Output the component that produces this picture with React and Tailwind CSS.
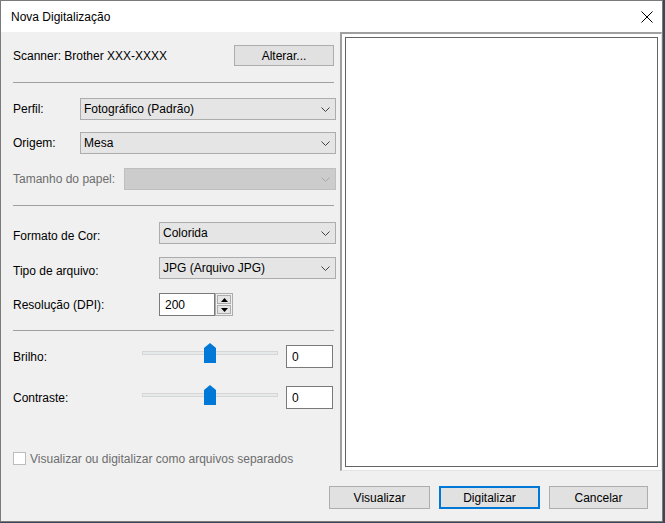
import React from "react";

function Chevron({ color = "#404040" }) {
  return (
    <svg width="9" height="5" viewBox="0 0 9 5" className="shrink-0">
      <path d="M0.5 0.5 L4.5 4.5 L8.5 0.5" fill="none" stroke={color} strokeWidth="1" />
    </svg>
  );
}

function Combo({ text, width, disabled }) {
  return (
    <div
      className={
        "h-[22px] shrink-0 flex items-center justify-between pl-[3px] pr-[5px] border " +
        (disabled ? "bg-[#cccccc] border-[#bfbfbf]" : "bg-[#e5e5e5] border-[#acacac]")
      }
      style={{ width }}
    >
      <span className="text-black">{text}</span>
      <Chevron color={disabled ? "#a8a8a8" : "#404040"} />
    </div>
  );
}

function Thumb() {
  return (
    <svg width="12" height="20" viewBox="0 0 12 20" className="absolute left-[62px] top-0">
      <polygon points="0,5 6,0 12,5 12,20 0,20" fill="#0078d7" />
    </svg>
  );
}

function SliderRow({ label, mt, boxMt }) {
  return (
    <div className={"flex items-start " + mt}>
      <div className={"w-[129px] h-[23px] flex items-center " + boxMt}>{label}</div>
      <div className="relative w-[136px] h-[20px]">
        <div className="absolute left-0 right-0 top-[8px] h-[4px] bg-[#e7eaea] border border-[#d6d6d6]" />
        <Thumb />
      </div>
      <div className={"ml-[8px] w-[47px] h-[23px] bg-white border border-[#7a7a7a] flex items-center pl-[5px] " + boxMt}>
        0
      </div>
    </div>
  );
}

function Button({ children, primary, width = "w-[101px] h-[23px]" }) {
  return (
    <div
      className={
        width +
        " flex items-center justify-center bg-[#e1e1e1] " +
        (primary ? "border-2 border-[#0078d7]" : "border border-[#adadad]")
      }
    >
      {children}
    </div>
  );
}

export default function App() {
  return (
    <div
      className="w-[665px] h-[523px] bg-[#3b4756] text-[12px] text-black"
      style={{ fontFamily: '"Liberation Sans", Arial, sans-serif' }}
    >
      <div className="w-[663px] h-[522px] border border-[#7a7a7a] bg-[#f0f0f0] flex flex-col">
        {/* Title bar */}
        <div className="h-[31px] bg-white flex items-center justify-between pl-[10px] pr-[9px]">
          <span>Nova Digitalização</span>
          <svg width="12" height="12" viewBox="0 0 12 12">
            <path d="M0.5 0.5 L11.5 11.5 M11.5 0.5 L0.5 11.5" stroke="#000" strokeWidth="1" fill="none" />
          </svg>
        </div>

        {/* Main */}
        <div className="flex h-[439px]">
          {/* Left panel */}
          <div className="w-[339px] pl-[12px] flex flex-col">
            <div className="mt-[13px] h-[21px] flex items-center justify-between w-[321px]">
              <span>Scanner: Brother XXX-XXXX</span>
              <Button width="w-[100px] h-[21px]">Alterar...</Button>
            </div>
            <div className="mt-[16px] h-px w-[321px] bg-[#a0a0a0]" />

            <div className="mt-[15px] h-[22px] flex items-center">
              <div className="w-[67px]">Perfil:</div>
              <Combo text="Fotográfico (Padrão)" width={256} />
            </div>
            <div className="mt-[12px] h-[22px] flex items-center">
              <div className="w-[67px]">Origem:</div>
              <Combo text="Mesa" width={256} />
            </div>
            <div className="mt-[14px] h-[22px] flex items-center">
              <div className="w-[111px] text-[#6d6d6d]">Tamanho do papel:</div>
              <Combo text="" width={212} disabled />
            </div>
            <div className="mt-[15px] h-px w-[321px] bg-[#a0a0a0]" />

            <div className="mt-[16px] h-[22px] flex items-start">
              <div className="w-[146px] h-[22px] pt-[5px] leading-[18px]">Formato de Cor:</div>
              <Combo text="Colorida" width={177} />
            </div>
            <div className="mt-[13px] h-[22px] flex items-start">
              <div className="w-[146px] h-[22px] pt-[5px] leading-[18px]">Tipo de arquivo:</div>
              <Combo text="JPG (Arquivo JPG)" width={177} />
            </div>
            <div className="mt-[14px] h-[23px] flex items-center">
              <div className="w-[146px]">Resolução (DPI):</div>
              <div className="w-[56px] h-[23px] bg-white border border-[#7a7a7a] flex items-center pl-[5px]">
                200
              </div>
              <div className="w-[18px] h-[23px] flex flex-col border border-[#acacac] bg-[#f0f0f0]">
                <div className="flex-1 m-[1px] mb-0 bg-[#e5e5e5] border border-[#acacac] flex items-center justify-center">
                  <svg width="7" height="4" viewBox="0 0 7 4">
                    <polygon points="0,4 3.5,0 7,4" fill="#000" />
                  </svg>
                </div>
                <div className="flex-1 m-[1px] bg-[#e5e5e5] border border-[#acacac] flex items-center justify-center">
                  <svg width="7" height="4" viewBox="0 0 7 4">
                    <polygon points="0,0 7,0 3.5,4" fill="#000" />
                  </svg>
                </div>
              </div>
            </div>
            <div className="mt-[14px] h-px w-[321px] bg-[#a0a0a0]" />

            <SliderRow label="Brilho:" mt="mt-[12px]" boxMt="mt-[2px]" />
            <SliderRow label="Contraste:" mt="mt-[17px]" boxMt="mt-[1px]" />

            <div className="mt-[43px] h-[13px] flex items-center">
              <div className="w-[13px] h-[13px] bg-white border border-[#bcbcbc]" />
              <span className="ml-[4px] text-[#6d6d6d]">Visualizar ou digitalizar como arquivos separados</span>
            </div>
          </div>

          {/* Preview */}
          <div className="w-[322px] h-[439px] border-t-2 border-l-2 border-r border-b border-t-[#a0a0a0] border-l-[#a0a0a0] border-r-[#e3e3e3] border-b-[#e3e3e3] bg-white p-[3px]">
            <div className="w-full h-full border border-[#646464] bg-white" />
          </div>
        </div>

        {/* Footer */}
        <div className="mt-[15px] flex justify-end gap-[9px] pr-[14px]">
          <Button>Visualizar</Button>
          <Button primary>Digitalizar</Button>
          <Button width="w-[99px] h-[23px]">Cancelar</Button>
        </div>
      </div>
    </div>
  );
}
